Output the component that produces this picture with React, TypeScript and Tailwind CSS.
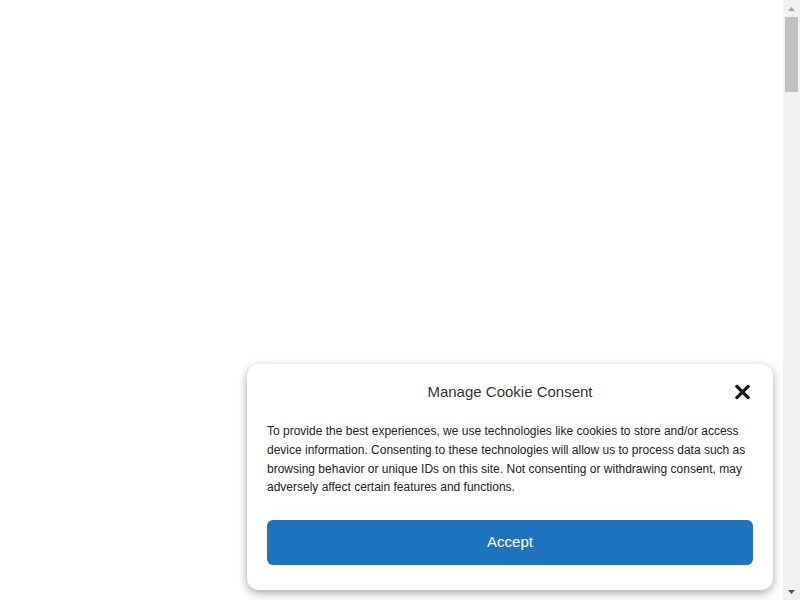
import React from "react";

export default function App() {
  return (
    <div className="flex h-screen overflow-hidden bg-white" style={{ fontFamily: '"Liberation Sans", Arial, sans-serif' }}>
      <main className="relative flex-1">
        <div className="absolute right-[10px] bottom-[10px] w-[526px] rounded-[12px] bg-white px-5 pt-[19px] pb-[25px] shadow-[0_3px_10px_rgba(0,0,0,0.35)]">
          <div className="relative flex h-[18px] items-center justify-center">
            <span className="text-[15px] text-[#333333]">Manage Cookie Consent</span>
            <button className="absolute right-[3px] top-1/2 -translate-y-1/2 text-[#1a1a1a]">
              <svg width="15" height="15" viewBox="0 0 15 15">
                <path d="M2 2 L13 13 M13 2 L2 13" stroke="currentColor" strokeWidth="3.2" strokeLinecap="square" />
              </svg>
            </button>
          </div>
          <p className="mt-[21px] text-[12px] leading-[18.67px] text-[#222222]">
            To provide the best experiences, we use technologies like cookies to store and/or access device information. Consenting to these technologies will allow us to process data such as browsing behavior or unique IDs on this site. Not consenting or withdrawing consent, may adversely affect certain features and functions.
          </p>
          <button className="mt-[23px] flex h-[45px] w-full items-center justify-center rounded-[6px] bg-[#1e73be] text-[15px] text-white">
            Accept
          </button>
        </div>
      </main>
      <div className="flex w-[17px] flex-col bg-[#f1f1f1]">
        <div className="flex h-[17px] items-center justify-center">
          <svg width="7" height="4" viewBox="0 0 7 4"><path d="M0 4 L3.5 0 L7 4 Z" fill="#a3a3a3" /></svg>
        </div>
        <div className="mx-[2px] h-[75px] bg-[#c1c1c1]" />
        <div className="flex-1" />
        <div className="flex h-[17px] items-center justify-center">
          <svg width="7" height="4" viewBox="0 0 7 4"><path d="M0 0 L3.5 4 L7 0 Z" fill="#505050" /></svg>
        </div>
      </div>
    </div>
  );
}
